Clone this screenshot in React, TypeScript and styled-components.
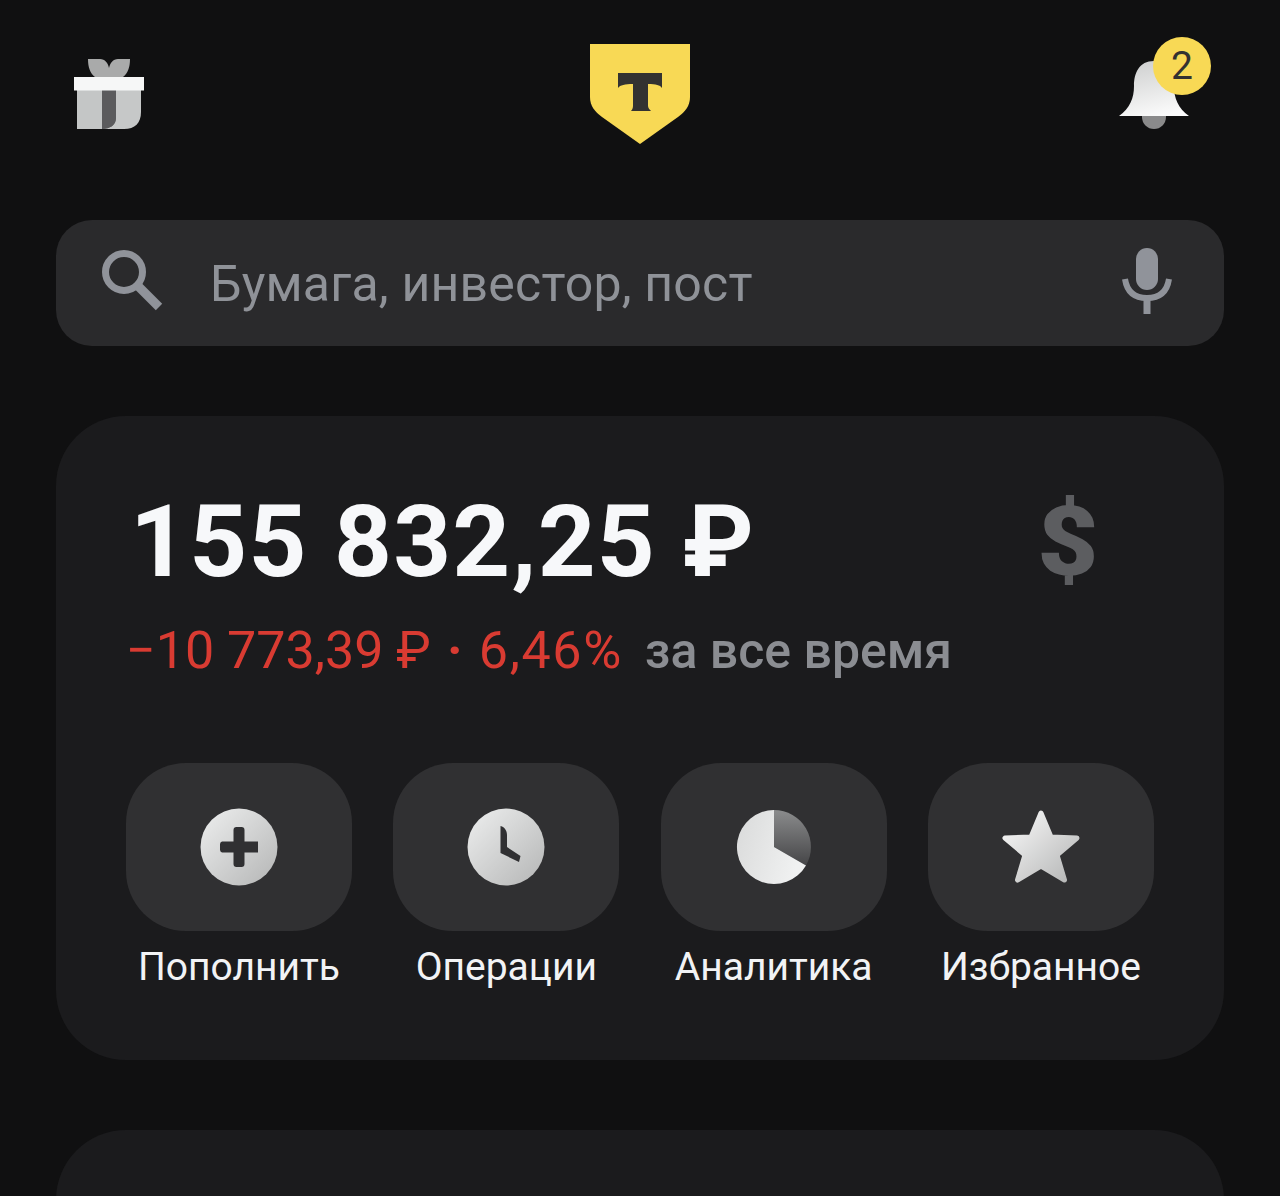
import React from "react";
import styled, { createGlobalStyle } from "styled-components";

const Global = createGlobalStyle`
  html, body { margin: 0; padding: 0; background: #101011; }
  body { height: 1196px; overflow: hidden; font-family: Roboto, "Noto Sans", sans-serif; }
`;

const Page = styled.div`
  height: 1196px;
  overflow: hidden;
  box-sizing: border-box;
  padding: 44px 56px 0;
  background: #101011;
`;

const Header = styled.header`
  display: grid;
  grid-template-columns: 1fr auto 1fr;
  align-items: center;
  height: 100px;
  margin-bottom: 76px;
`;

const GiftSlot = styled.div`
  display: flex;
  padding-left: 18px;
`;

const BellSlot = styled.div`
  display: flex;
  justify-content: flex-end;
  padding-right: 35px;
`;

const BellWrap = styled.div`
  position: relative;
  display: flex;
  width: 70px;
  height: 70px;
`;

const Badge = styled.span`
  position: absolute;
  top: -22px;
  left: 34px;
  width: 58px;
  height: 58px;
  border-radius: 50%;
  background: #f8d955;
  color: #333231;
  font-size: 39px;
  line-height: 58px;
  text-align: center;
`;

const SearchBar = styled.div`
  display: flex;
  align-items: center;
  height: 126px;
  box-sizing: border-box;
  padding: 0 52px 0 46px;
  border-radius: 36px;
  background: #2a2a2c;
  margin-bottom: 70px;
`;

const SearchGlyph = styled.div`
  display: flex;
  margin-bottom: 4px;
`;

const Placeholder = styled.span`
  flex: 1;
  margin-left: 46px;
  color: #8f9298;
  font-size: 50px;
  letter-spacing: 0.2px;
  position: relative;
  top: 1px;
`;

const Card = styled.section`
  box-sizing: border-box;
  height: 644px;
  padding: 70px 70px 0;
  border-radius: 70px;
  background: #1b1b1d;
  margin-bottom: 70px;
`;

const BalanceRow = styled.div`
  display: flex;
  justify-content: space-between;
  align-items: center;
  height: 112px;
  padding-left: 4px;
  padding-right: 58px;
`;

const Balance = styled.div`
  color: #f7f8fa;
  font-size: 101px;
  font-weight: 700;
  line-height: 112px;
  letter-spacing: 1.25px;
  white-space: nowrap;
`;

const CurrencySign = styled.div`
  color: #5c5d60;
  font-size: 96px;
  font-weight: 900;
  line-height: 112px;
  transform: scaleX(1.1);
`;

const ChangeRow = styled.div`
  display: flex;
  align-items: baseline;
  height: 60px;
  margin-top: 23px;
  line-height: 60px;
  white-space: nowrap;
  color: #d93b32;
  font-size: 52px;
`;

const Amount = styled.span`
  letter-spacing: 0;
`;

const Dot = styled.span`
  width: 48px;
  font-weight: 700;
  text-align: center;
`;

const Percent = styled.span`
  letter-spacing: 1.6px;
  margin-right: 22px;
`;

const Period = styled.span`
  color: #8b8d92;
  font-size: 50px;
  font-weight: 500;
`;

const Actions = styled.div`
  display: grid;
  grid-template-columns: repeat(4, 226px);
  justify-content: space-between;
  margin-top: 82px;
`;

const Action = styled.div`
  display: flex;
  flex-direction: column;
  align-items: center;
`;

const ActionTile = styled.div`
  display: flex;
  align-items: center;
  justify-content: center;
  width: 100%;
  height: 168px;
  border-radius: 60px;
  background: #303032;
`;

const ActionLabel = styled.span`
  margin-top: 12px;
  color: #f2f3f5;
  font-size: 39px;
  line-height: 48px;
  white-space: nowrap;
`;

const StubCard = styled.section`
  height: 200px;
  border-radius: 70px;
  background: #1b1b1d;
`;

const Metal = ({ id }: { id: string }) => (
  <linearGradient id={id} x1="0" y1="0" x2="1" y2="1">
    <stop offset="0" stopColor="#eeefef" />
    <stop offset="1" stopColor="#b4b5b5" />
  </linearGradient>
);

const GiftIcon = () => (
  <svg width="70" height="72" viewBox="0 0 70 72">
    <path d="M14 1 H26 C31 1 34 5 35 10 C36 5 39 1 44 1 H56 C56 9 54 15 49 19 H21 C16 15 14 9 14 1 Z" fill="#a9aaaa" />
    <path d="M3 32 H28 V71 H3 Z" fill="#c4c6c6" />
    <path d="M28 32 H42 V60 C42 67 36 71 28 71 Z" fill="#5b5b5d" />
    <path d="M42 32 H67 V54 C67 65 61 71 50 71 H28 C36 71 42 67 42 60 Z" fill="#c6c8c8" />
    <rect x="0" y="19" width="70" height="13.5" fill="#f6f7f7" />
  </svg>
);

const LogoIcon = () => (
  <svg width="100" height="100" viewBox="0 0 100 100">
    <path d="M0 0 H100 V53 C100 62 95 68 88 73 L50 100 L12 73 C5 68 0 62 0 53 Z" fill="#f8d955" />
    <path d="M28 29 H72 V44 C70 41 66 40 58 40 V62 C58 64 60 66 61 67 H41 C42 66 43 64 43 62 V40 C35 40 30 41 28 44 Z" fill="#333231" />
  </svg>
);

const BellIcon = () => (
  <svg width="70" height="70" viewBox="0 0 70 70">
    <defs>
      <linearGradient id="bellG" x1="0.3" y1="0" x2="0.6" y2="1">
        <stop offset="0" stopColor="#cfd0d0" />
        <stop offset="1" stopColor="#fbfbfb" />
      </linearGradient>
    </defs>
    <path d="M23 57 H47 V58 A12 12 0 0 1 23 58 Z" fill="#8a8a8b" />
    <path d="M35 2 C50 2 55 14 55 27 C55 39 59 49 70 57 H0 C11 49 15 39 15 27 C15 14 20 2 35 2 Z" fill="url(#bellG)" />
  </svg>
);

const SearchIcon = () => (
  <svg width="62" height="62" viewBox="0 0 62 62" fill="none" stroke="#90939a">
    <circle cx="22" cy="22" r="18.5" strokeWidth="7" />
    <path d="M36 36 L57 57" strokeWidth="9" />
  </svg>
);

const MicIcon = () => (
  <svg width="50" height="66" viewBox="0 0 50 66" fill="none">
    <rect x="14" y="0" width="22" height="42" rx="11" fill="#90939a" />
    <path d="M3 31 C5 44 13 50 25 50 C37 50 45 44 47 31" stroke="#90939a" strokeWidth="6" />
    <path d="M25 49 V66" stroke="#90939a" strokeWidth="7" />
  </svg>
);

const PlusIcon = () => (
  <svg width="78" height="78" viewBox="0 0 78 78">
    <defs><Metal id="plusG" /></defs>
    <circle cx="39" cy="39" r="38.5" fill="url(#plusG)" />
    <path d="M33.5 22 A3 3 0 0 1 36.5 19 H41.5 A3 3 0 0 1 44.5 22 V33.5 H58 V44.5 H44.5 V56 A3 3 0 0 1 41.5 59 H36.5 A3 3 0 0 1 33.5 56 V44.5 H22 A3 3 0 0 1 20 41.5 V36.5 A3 3 0 0 1 22 33.5 H33.5 Z" fill="#303032" />
  </svg>
);

const ClockIcon = () => (
  <svg width="78" height="78" viewBox="0 0 78 78">
    <defs><Metal id="clockG" /></defs>
    <circle cx="39" cy="39" r="38.5" fill="url(#clockG)" />
    <path d="M33.5 18 C38 19 40 23 40 27 V39 L53.5 48 L52 54 L33.5 45 Z" fill="#303032" />
  </svg>
);

const PieIcon = () => (
  <svg width="78" height="78" viewBox="0 0 78 78">
    <defs>
      <linearGradient id="pieDark" x1="0" y1="0" x2="0" y2="1">
        <stop offset="0" stopColor="#8b8c8d" />
        <stop offset="1" stopColor="#454547" />
      </linearGradient>
      <linearGradient id="pieLight" x1="0" y1="0" x2="1" y2="0.3">
        <stop offset="0" stopColor="#d9dada" />
        <stop offset="1" stopColor="#f0f1f1" />
      </linearGradient>
    </defs>
    <path d="M39 39 V2 A37 37 0 0 1 71 57.5 Z" fill="url(#pieDark)" />
    <path d="M39 39 V2 A37 37 0 1 0 71 57.5 Z" fill="url(#pieLight)" />
  </svg>
);

const StarIcon = () => (
  <svg width="78" height="76" viewBox="0 0 78 76">
    <defs>
      <linearGradient id="starG" x1="0" y1="0" x2="1" y2="1">
        <stop offset="0" stopColor="#fbfbfb" />
        <stop offset="1" stopColor="#b4b5b5" />
      </linearGradient>
    </defs>
    <path d="M39 4 L49 28 L75 29 L55 46 L62.5 71 L39 57 L15.5 71 L23 46 L3 29 L29 28 Z" fill="url(#starG)" stroke="url(#starG)" strokeWidth="5" strokeLinejoin="round" />
  </svg>
);

const actions = [
  { label: "Пополнить", icon: <PlusIcon /> },
  { label: "Операции", icon: <ClockIcon /> },
  { label: "Аналитика", icon: <PieIcon /> },
  { label: "Избранное", icon: <StarIcon /> },
];

export default function App() {
  return (
    <Page>
      <Global />
      <Header>
        <GiftSlot><GiftIcon /></GiftSlot>
        <LogoIcon />
        <BellSlot>
          <BellWrap>
            <BellIcon />
            <Badge>2</Badge>
          </BellWrap>
        </BellSlot>
      </Header>
      <SearchBar>
        <SearchGlyph><SearchIcon /></SearchGlyph>
        <Placeholder>Бумага, инвестор, пост</Placeholder>
        <SearchGlyph><MicIcon /></SearchGlyph>
      </SearchBar>
      <Card>
        <BalanceRow>
          <Balance>155 832,25 ₽</Balance>
          <CurrencySign>$</CurrencySign>
        </BalanceRow>
        <ChangeRow>
          <Amount>−10 773,39 ₽</Amount>
          <Dot>·</Dot>
          <Percent>6,46%</Percent>
          <Period>за все время</Period>
        </ChangeRow>
        <Actions>
          {actions.map((a) => (
            <Action key={a.label}>
              <ActionTile>{a.icon}</ActionTile>
              <ActionLabel>{a.label}</ActionLabel>
            </Action>
          ))}
        </Actions>
      </Card>
      <StubCard />
    </Page>
  );
}
